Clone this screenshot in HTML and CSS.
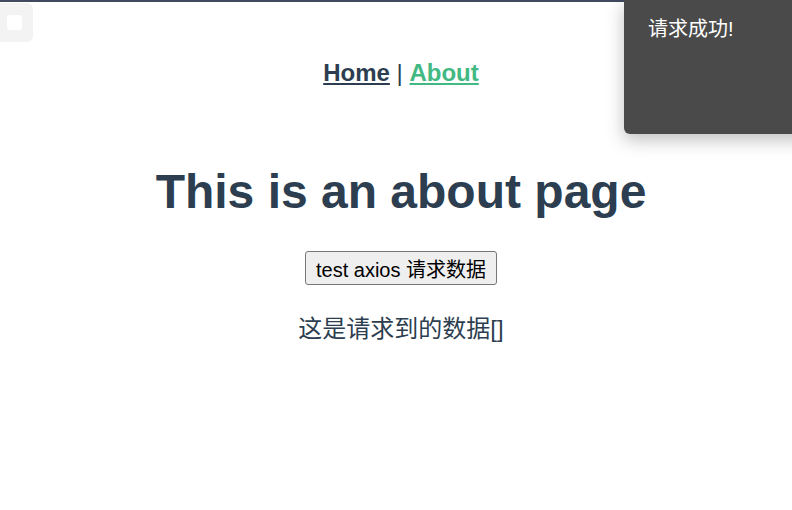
FILE: index.html
```html
<!DOCTYPE html>
<html lang="en">

<head>
    <meta charset="UTF-8">
    <meta name="viewport" content="width=device-width, initial-scale=1.0">
    <title>About</title>
    <link rel="stylesheet" href="styles.css">
</head>

<body>
    <div class="topLine"></div>

    <!-- ====> little widget at the top left corner -->
    <div class="corner">
        <span class="cornerBox"></span>
    </div>

    <div id="app">
        <div id="nav">
            <a href="#" class="link">Home</a> |
            <a href="#" class="link active">About</a>
        </div>

        <div class="about">
            <h1>This is an about page</h1>
            <button type="button">test axios 请求数据</button>
            <p>这是请求到的数据[]</p>
        </div>
    </div>

    <!-- ====> message after the request -->
    <div class="toast">请求成功!</div>
</body>

</html>
```

FILE: styles.css
```css
* {
    padding: 0;
    margin: 0;
    box-sizing: border-box;
}

body {
    width: 100%;
    height: 100%;
    background: #fff;
    font-family: "Liberation Sans", Arial, "Noto Sans CJK SC", sans-serif;
    overflow: hidden;
}

.topLine {
    height: 2px;
    background-color: #404a5e;
}

.corner {
    position: absolute;
    left: 0;
    top: 3px;
    width: 33px;
    height: 39px;
    background-color: #f3f3f3;
    border-radius: 0 6px 6px 0;
}

.corner .cornerBox {
    position: absolute;
    left: 7px;
    top: 12px;
    width: 15px;
    height: 15px;
    background-color: #fff;
    border-radius: 3px;
}

#app {
    color: #2c3e50;
    text-align: center;
    padding-top: 12px;
    padding-left: 10px;
}

#nav {
    padding: 45px;
    font-size: 24px;
}

#nav a {
    font-weight: bold;
    color: #2c3e50;
}

#nav a.active {
    color: #42b983;
}

.about h1 {
    font-size: 48px;
    margin: 32px 0;
}

.about button {
    font-family: "Liberation Sans", Arial, "Noto Sans CJK SC", sans-serif;
    font-size: 20px;
    color: #000;
    padding: 2px 10px;
    height: 34px;
    background-color: #efefef;
    border: 1px solid #767676;
    border-radius: 3px;
}

.about p {
    font-size: 24px;
    margin-top: 24px;
}

.toast {
    position: absolute;
    top: 0;
    left: 624px;
    width: 200px;
    height: 134px;
    padding: 13px 24px;
    background-color: #4a4a4a;
    color: #fff;
    font-size: 20px;
    border-radius: 0 0 6px 6px;
    box-shadow: 0 6px 18px rgba(0, 0, 0, 0.25);
}
```
